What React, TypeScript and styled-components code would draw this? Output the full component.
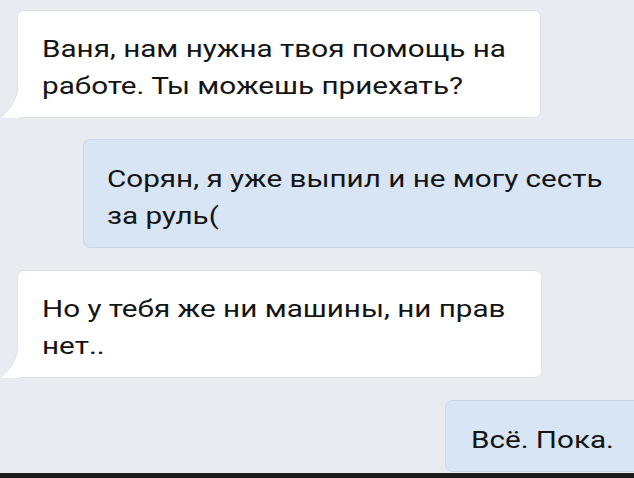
import styled, { createGlobalStyle } from "styled-components";

const GlobalStyle = createGlobalStyle`
  html, body {
    margin: 0;
    padding: 0;
    background: #e8ecf1;
  }
`;

const Page = styled.div`
  width: 634px;
  height: 478px;
  overflow: hidden;
  background: #e8ecf1;
  display: flex;
  flex-direction: column;
  font-family: Roboto, "Liberation Sans", sans-serif;
  color: #141414;
`;

const Feed = styled.div`
  flex: 1;
  display: flex;
  flex-direction: column;
`;

type BubbleProps = {
  $outgoing?: boolean;
  $top: number;
  $left: number;
  $width: number;
  $padLeft: number;
};

const Bubble = styled.div<BubbleProps>`
  position: relative;
  box-sizing: border-box;
  margin-top: ${({ $top }) => $top}px;
  margin-left: ${({ $left }) => $left}px;
  width: ${({ $width }) => $width}px;
  padding: ${({ $outgoing }) => ($outgoing ? "21px 0 12px" : "20px 0 12px")};
  padding-left: ${({ $padLeft }) => $padLeft}px;
  background: ${({ $outgoing }) => ($outgoing ? "#d7e5f5" : "#ffffff")};
  border: 1px solid ${({ $outgoing }) => ($outgoing ? "#c9d8ea" : "#dde2e8")};
  border-radius: ${({ $outgoing }) => ($outgoing ? "7px" : "7px 7px 7px 0")};
  font-size: 24px;
  line-height: 37px;
`;

// the screenshot is stretched sideways, so the text is too
const Text = styled.div`
  transform: scaleX(1.235);
  transform-origin: left top;
  white-space: nowrap;
`;

const Tail = styled.svg`
  position: absolute;
  left: -18px;
  bottom: -1px;
  width: 19px;
  height: 32px;
`;

const BottomBar = styled.div`
  height: 5px;
  background: #1b1b1b;
`;

function IncomingTail() {
  return (
    <Tail viewBox="0 0 19 32">
      <path d="M18 0 C17 14 10 24 0 32 L19 32 L19 0 Z" fill="#ffffff" />
      <path d="M18 0 C17 14 10 24 0.5 31.5" fill="none" stroke="#dde2e8" strokeWidth="1" />
    </Tail>
  );
}

export default function App() {
  return (
    <>
      <GlobalStyle />
      <Page>
        <Feed>
          <Bubble $top={10} $left={17} $width={524} $padLeft={24}>
            <Text>
              Ваня, нам нужна твоя помощь на
              <br />
              работе. Ты можешь приехать?
            </Text>
            <IncomingTail />
          </Bubble>
          <Bubble $outgoing $top={21} $left={83} $width={560} $padLeft={23}>
            <Text>
              Сорян, я уже выпил и не могу сесть
              <br />
              за руль(
            </Text>
          </Bubble>
          <Bubble $top={22} $left={17} $width={525} $padLeft={24}>
            <Text>
              Но у тебя же ни машины, ни прав
              <br />
              нет..
            </Text>
            <IncomingTail />
          </Bubble>
          <Bubble $outgoing $top={22} $left={445} $width={200} $padLeft={25}>
            <Text>Всё. Пока.</Text>
          </Bubble>
        </Feed>
        <BottomBar />
      </Page>
    </>
  );
}
